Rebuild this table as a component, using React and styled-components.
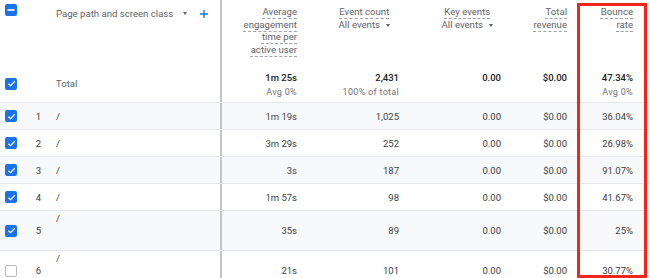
import React from "react";
import styled, { createGlobalStyle, css } from "styled-components";

const GlobalStyle = createGlobalStyle`
  html, body { margin: 0; padding: 0; background: #fff; }
  body { font-family: Roboto, "Noto Sans", Arial, sans-serif; -webkit-font-smoothing: antialiased; }
  * { box-sizing: border-box; }
`;

const Frame = styled.div`
  position: relative;
  width: 650px;
  height: 278px;
  overflow: hidden;
  background: #fff;
`;

const cols = "28px 20px 174px 83px 102px 102px 66px 66px 1fr";

const HeaderRow = styled.div`
  display: grid;
  grid-template-columns: ${cols};
  height: 65px;
  font-size: 9.6px;
  color: #5f6368;
`;

const Row = styled.div`
  display: grid;
  grid-template-columns: ${cols};
  height: ${(p) => p.$h}px;
  background: ${(p) => (p.$shade ? "#f8f9fa" : "#fff")};
  border-bottom: 1px solid #e6e7e9;
  font-size: 9.5px;
  color: #3c4043;
`;

const CheckCell = styled.div`
  display: flex;
  align-items: ${(p) => (p.$top ? "flex-start" : "center")};
  padding-left: 5px;
  padding-top: ${(p) => (p.$top ? "4px" : "0")};
`;

const IndexCell = styled.div`
  display: flex;
  align-items: center;
  justify-content: center;
  padding-left: 1px;
`;

const PathCell = styled.div`
  display: flex;
  align-items: ${(p) => (p.$top ? "flex-start" : "center")};
  padding-left: 8px;
  padding-top: ${(p) => (p.$pt || 0)}px;
  border-right: 2px solid #c3c6c9;
  line-height: 13px;
  color: ${(p) => (p.$muted ? "#5f6368" : "inherit")};
`;

const DimHeader = styled(PathCell)`
  align-items: flex-start;
  padding-top: 7px;
`;

const DimTitle = styled.span`
  color: #5f6368;
  line-height: 13px;
`;

const Caret = styled.span`
  display: inline-block;
  width: 0;
  height: 0;
  border-left: 2.5px solid transparent;
  border-right: 2.5px solid transparent;
  border-top: 3px solid #5f6368;
  margin-left: ${(p) => p.$ml || 6}px;
  margin-top: 5px;
`;

const PlusIcon = styled.svg`
  margin-left: 13px;
  margin-top: 3px;
`;

const MetricHeader = styled.div`
  display: flex;
  justify-content: flex-end;
  align-items: flex-start;
  padding-top: 6px;
  padding-right: ${(p) => p.$pr || 8}px;
  text-align: right;
  line-height: 12.6px;
`;

const HeadStack = styled.div`
  display: flex;
  flex-direction: column;
  align-items: ${(p) => (p.$center ? "center" : "flex-end")};
`;

const Dotted = styled.span`
  text-decoration: underline dashed #a0a4a8;
  text-decoration-thickness: 1px;
  text-underline-offset: 2.5px;
  white-space: nowrap;
`;

const Selector = styled.span`
  display: inline-flex;
  align-items: flex-start;
  white-space: nowrap;
`;

const Value = styled.div`
  display: flex;
  flex-direction: column;
  align-items: flex-end;
  justify-content: center;
  padding-right: 8px;
  line-height: 13px;
  white-space: nowrap;
`;

const TotalValue = styled(Value)`
  justify-content: flex-start;
  padding-top: 6px;
`;

const Strong = styled.span`
  font-weight: 500;
  color: #202124;
`;

const Sub = styled.span`
  margin-top: 2px;
  font-size: 9px;
  letter-spacing: 0.3px;
  color: #70757a;
`;

const Box = styled.span`
  display: inline-flex;
  align-items: center;
  justify-content: center;
  width: 12px;
  height: 12px;
  border-radius: 2px;
  ${(p) =>
    p.$on
      ? css`background: #1a73e8;`
      : css`background: #fff; border: 1.5px solid #b5b8bc;`}
`;

const Highlight = styled.div`
  position: absolute;
  left: 577px;
  top: 3px;
  width: 70px;
  height: 275px;
  border: 3px solid #f0261a;
  pointer-events: none;
`;

function Checkbox({ state }) {
  if (state === "off") return <Box />;
  return (
    <Box $on>
      {state === "mixed" ? (
        <svg width="8" height="8" viewBox="0 0 8 8">
          <rect x="0.5" y="3.2" width="7" height="1.6" fill="#fff" />
        </svg>
      ) : (
        <svg width="9" height="9" viewBox="0 0 10 10">
          <path d="M1.6 5.2 L4 7.4 L8.6 2.6" fill="none" stroke="#fff" strokeWidth="1.5" />
        </svg>
      )}
    </Box>
  );
}

const rows = [
  { i: 1, t: "1m 19s", e: "1,025", b: "36.04%", h: 27 },
  { i: 2, t: "3m 29s", e: "252", b: "26.98%", h: 27 },
  { i: 3, t: "3s", e: "187", b: "91.07%", h: 27 },
  { i: 4, t: "1m 57s", e: "98", b: "41.67%", h: 27 },
  { i: 5, t: "35s", e: "89", b: "25%", h: 40, tall: true },
  { i: 6, t: "21s", e: "101", b: "30.77%", h: 40, tall: true, off: true },
];

export default function App() {
  return (
    <>
      <GlobalStyle />
      <Frame>
        <HeaderRow>
          <CheckCell $top>
            <Checkbox state="mixed" />
          </CheckCell>
          <div />
          <DimHeader>
            <DimTitle>Page path and screen class</DimTitle>
            <Caret $ml={10} />
            <PlusIcon width="8" height="8" viewBox="0 0 8 8">
              <path d="M4 0 V8 M0 4 H8" stroke="#1a73e8" strokeWidth="1.4" />
            </PlusIcon>
          </DimHeader>
          <MetricHeader>
            <HeadStack>
              <Dotted>Average</Dotted>
              <Dotted>engagement</Dotted>
              <Dotted>time per</Dotted>
              <Dotted>active user</Dotted>
            </HeadStack>
          </MetricHeader>
          <MetricHeader $pr={17}>
            <HeadStack $center>
              <Dotted>Event count</Dotted>
              <Selector>
                All events
                <Caret />
              </Selector>
            </HeadStack>
          </MetricHeader>
          <MetricHeader $pr={16}>
            <HeadStack $center>
              <Dotted>Key events</Dotted>
              <Selector>
                All events
                <Caret />
              </Selector>
            </HeadStack>
          </MetricHeader>
          <MetricHeader>
            <HeadStack>
              <Dotted>Total</Dotted>
              <Dotted>revenue</Dotted>
            </HeadStack>
          </MetricHeader>
          <MetricHeader>
            <HeadStack>
              <Dotted>Bounce</Dotted>
              <Dotted>rate</Dotted>
            </HeadStack>
          </MetricHeader>
          <div />
        </HeaderRow>

        <Row $h={38}>
          <CheckCell>
            <Checkbox state="on" />
          </CheckCell>
          <div />
          <PathCell $muted>Total</PathCell>
          <TotalValue>
            <Strong>1m 25s</Strong>
            <Sub>Avg 0%</Sub>
          </TotalValue>
          <TotalValue>
            <Strong>2,431</Strong>
            <Sub>100% of total</Sub>
          </TotalValue>
          <TotalValue>
            <Strong>0.00</Strong>
          </TotalValue>
          <TotalValue>
            <Strong>$0.00</Strong>
          </TotalValue>
          <TotalValue>
            <Strong>47.34%</Strong>
            <Sub>Avg 0%</Sub>
          </TotalValue>
          <div />
        </Row>

        {rows.map((r) => (
          <Row key={r.i} $h={r.h} $shade={r.i % 2 === 1}>
            <CheckCell>
              <Checkbox state={r.off ? "off" : "on"} />
            </CheckCell>
            <IndexCell>{r.i}</IndexCell>
            <PathCell $top={r.tall} $pt={r.tall ? 1 : 0}>
              /
            </PathCell>
            <Value>{r.t}</Value>
            <Value>{r.e}</Value>
            <Value>0.00</Value>
            <Value>$0.00</Value>
            <Value>{r.b}</Value>
            <div />
          </Row>
        ))}
        <Highlight />
      </Frame>
    </>
  );
}
